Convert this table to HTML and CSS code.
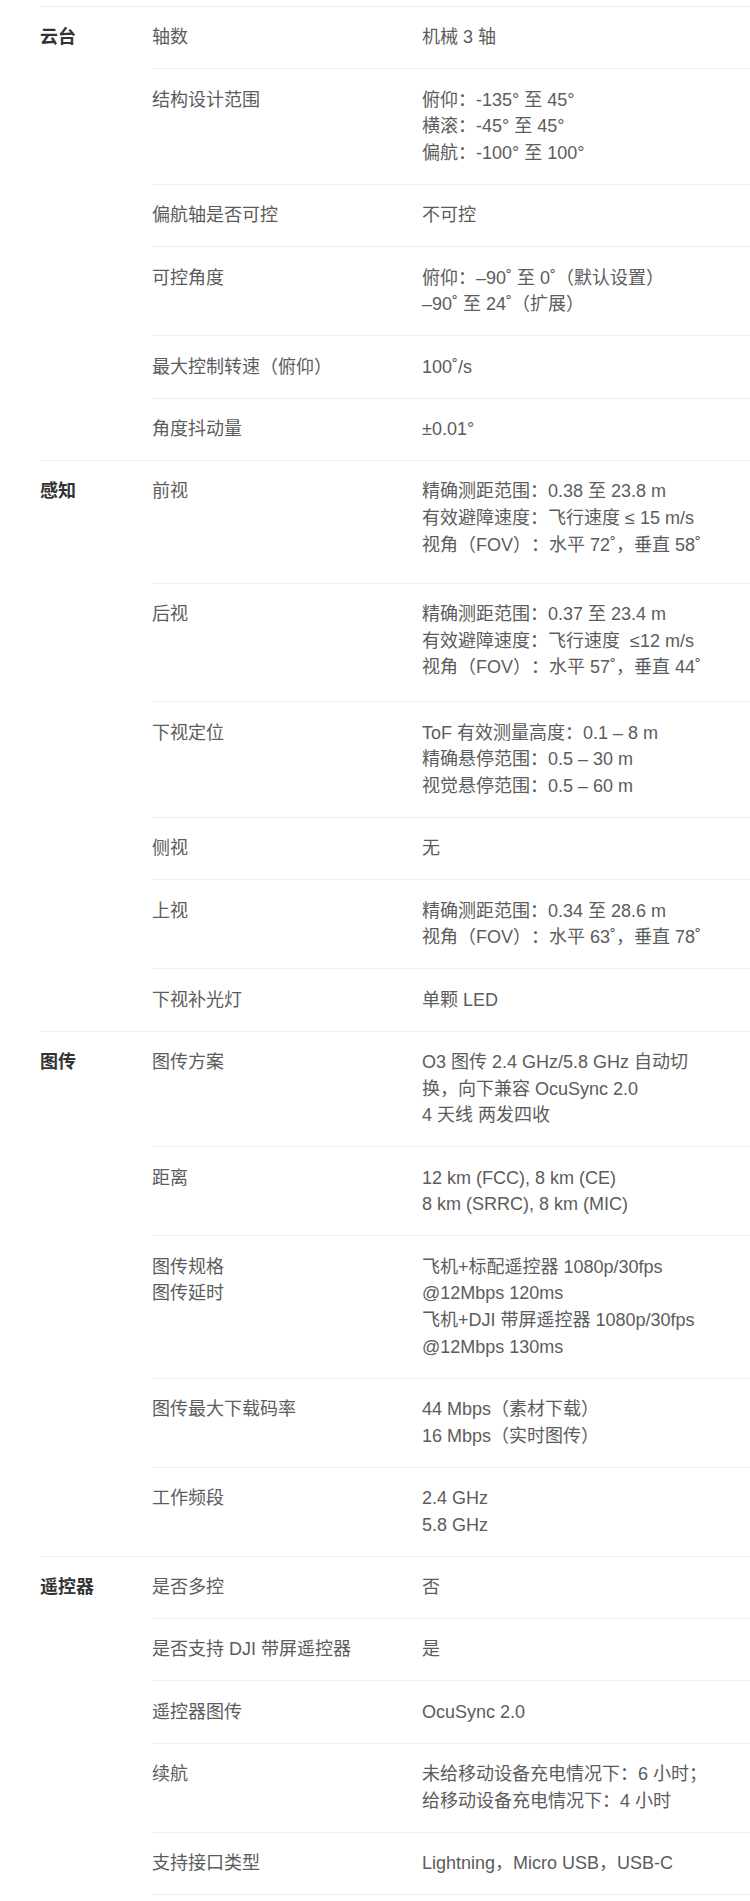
FILE: index.html
```html
<!DOCTYPE html>
<html>
<head>
  <meta charset="utf-8">
  <link rel="stylesheet" href="styles.css">
</head>
<body>
  <div class="specs">

    <div class="spec-group">
      <div class="group-title">云台</div>
      <div class="group-items">
        <div class="spec-row">
          <div class="spec-label">轴数</div>
          <div class="spec-value">机械 3 轴</div>
        </div>
        <div class="spec-row">
          <div class="spec-label">结构设计范围</div>
          <div class="spec-value">俯仰：-135° 至 45°<br>横滚：-45° 至 45°<br>偏航：-100° 至 100°</div>
        </div>
        <div class="spec-row">
          <div class="spec-label">偏航轴是否可控</div>
          <div class="spec-value">不可控</div>
        </div>
        <div class="spec-row">
          <div class="spec-label">可控角度</div>
          <div class="spec-value">俯仰：–90˚ 至 0˚（默认设置）<br>–90˚ 至 24˚（扩展）</div>
        </div>
        <div class="spec-row">
          <div class="spec-label">最大控制转速（俯仰）</div>
          <div class="spec-value">100˚/s</div>
        </div>
        <div class="spec-row">
          <div class="spec-label">角度抖动量</div>
          <div class="spec-value">±0.01°</div>
        </div>
      </div>
    </div>

    <div class="spec-group">
      <div class="group-title">感知</div>
      <div class="group-items">
        <div class="spec-row tall-row">
          <div class="spec-label">前视</div>
          <div class="spec-value">精确测距范围：0.38 至 23.8 m<br>有效避障速度：飞行速度 ≤ 15 m/s<br>视角（FOV）：水平 72˚，垂直 58˚</div>
        </div>
        <div class="spec-row taller-row">
          <div class="spec-label">后视</div>
          <div class="spec-value">精确测距范围：0.37 至 23.4 m<br>有效避障速度：飞行速度 &nbsp;≤12 m/s<br>视角（FOV）：水平 57˚，垂直 44˚</div>
        </div>
        <div class="spec-row">
          <div class="spec-label">下视定位</div>
          <div class="spec-value">ToF 有效测量高度：0.1 – 8 m<br>精确悬停范围：0.5 – 30 m<br>视觉悬停范围：0.5 – 60 m</div>
        </div>
        <div class="spec-row">
          <div class="spec-label">侧视</div>
          <div class="spec-value">无</div>
        </div>
        <div class="spec-row">
          <div class="spec-label">上视</div>
          <div class="spec-value">精确测距范围：0.34 至 28.6 m<br>视角（FOV）：水平 63˚，垂直 78˚</div>
        </div>
        <div class="spec-row">
          <div class="spec-label">下视补光灯</div>
          <div class="spec-value">单颗 LED</div>
        </div>
      </div>
    </div>

    <div class="spec-group">
      <div class="group-title">图传</div>
      <div class="group-items">
        <div class="spec-row">
          <div class="spec-label">图传方案</div>
          <div class="spec-value">O3 图传 2.4 GHz/5.8 GHz 自动切<br>换，向下兼容 OcuSync 2.0<br>4 天线 两发四收</div>
        </div>
        <div class="spec-row">
          <div class="spec-label">距离</div>
          <div class="spec-value">12 km (FCC), 8 km (CE)<br>8 km (SRRC), 8 km (MIC)</div>
        </div>
        <div class="spec-row">
          <div class="spec-label">图传规格<br>图传延时</div>
          <div class="spec-value">飞机+标配遥控器 1080p/30fps<br>@12Mbps 120ms<br>飞机+DJI 带屏遥控器 1080p/30fps<br>@12Mbps 130ms</div>
        </div>
        <div class="spec-row">
          <div class="spec-label">图传最大下载码率</div>
          <div class="spec-value">44 Mbps（素材下载）<br>16 Mbps（实时图传）</div>
        </div>
        <div class="spec-row">
          <div class="spec-label">工作频段</div>
          <div class="spec-value">2.4 GHz<br>5.8 GHz</div>
        </div>
      </div>
    </div>

    <div class="spec-group last-group">
      <div class="group-title">遥控器</div>
      <div class="group-items">
        <div class="spec-row">
          <div class="spec-label">是否多控</div>
          <div class="spec-value">否</div>
        </div>
        <div class="spec-row">
          <div class="spec-label">是否支持 DJI 带屏遥控器</div>
          <div class="spec-value">是</div>
        </div>
        <div class="spec-row">
          <div class="spec-label">遥控器图传</div>
          <div class="spec-value">OcuSync 2.0</div>
        </div>
        <div class="spec-row">
          <div class="spec-label">续航</div>
          <div class="spec-value">未给移动设备充电情况下：6 小时；<br>给移动设备充电情况下：4 小时</div>
        </div>
        <div class="spec-row">
          <div class="spec-label">支持接口类型</div>
          <div class="spec-value">Lightning，Micro USB，USB-C</div>
        </div>
      </div>
    </div>

  </div>
</body>
</html>
```

FILE: styles.css
```css
body {
  margin: 0;
  background-color: #ffffff;
  font-family: "Liberation Sans", "Noto Sans CJK SC", sans-serif;
  font-size: 18px;
  color: #5c5c5c;
  text-spacing-trim: space-all;
}

.specs {
  margin: 6px 0 0 40px;
  border-top: 1px solid #eeeeee;
}

.spec-group {
  display: flex;
  border-bottom: 1px solid #eeeeee;
}

.last-group {
  border-bottom: none;
}

.group-title {
  width: 112px;
  flex-shrink: 0;
  padding-top: 17.35px;
  line-height: 26.65px;
  font-weight: bold;
  color: #333333;
}

.group-items {
  flex: 1;
}

.spec-row {
  display: flex;
  padding: 17.35px 0;
  line-height: 26.65px;
  border-bottom: 1px solid #eeeeee;
}

.tall-row {
  padding-bottom: 24.35px;
}

.taller-row {
  padding-bottom: 20.35px;
}

.spec-group:not(.last-group) .spec-row:last-child {
  border-bottom: none;
}

.spec-label {
  width: 270px;
  flex-shrink: 0;
}

.spec-value {
  flex: 1;
  white-space: nowrap;
}
```
